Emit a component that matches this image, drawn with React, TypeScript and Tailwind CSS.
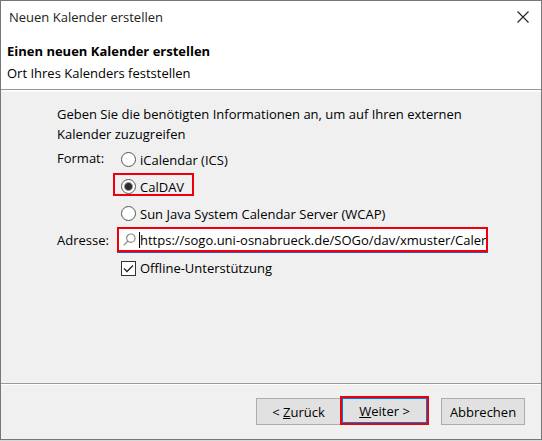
import { useState, type ReactNode } from 'react';
import { clsx } from 'clsx';

const formats = [
  { id: 'ics', label: 'iCalendar (ICS)' },
  { id: 'caldav', label: 'CalDAV' },
  { id: 'wcap', label: 'Sun Java System Calendar Server (WCAP)' },
];

function SearchIcon() {
  return (
    <svg className="h-[14px] w-[14px] shrink-0" viewBox="0 0 14 14" fill="none" stroke="#8a8a8a" strokeWidth="1.2" aria-hidden="true">
      <circle cx="7.8" cy="5.2" r="4.2" />
      <path d="M4.8 8.3.6 12.4" />
    </svg>
  );
}

function DialogButton({ children, className }: { children: ReactNode; className?: string }) {
  return (
    <button type="button" className={clsx('whitespace-nowrap bg-[#e1e1e1] text-center', className)}>
      {children}
    </button>
  );
}

export default function App() {
  const [format, setFormat] = useState('caldav');
  const [address, setAddress] = useState('https://sogo.uni-osnabrueck.de/SOGo/dav/xmuster/Caler');
  const [offline, setOffline] = useState(true);

  return (
    <div className="min-h-screen bg-[#d8d8d8] pb-px font-['Open_Sans','Noto_Sans',sans-serif] text-[13px] leading-5 text-black">
      <div className="flex min-h-[calc(100vh-1px)] flex-col border border-[#777777] bg-[#f0f0f0]">
        <header className="border-b border-[#999999] bg-white pb-1.5">
          <div className="flex h-8 items-center justify-between pr-3 pl-2">
            <span className="text-[#222222]">Neuen Kalender erstellen</span>
            <button type="button" aria-label="Schließen">
              <svg className="h-3 w-3" viewBox="0 0 12 12" stroke="#222222" strokeWidth="1.1">
                <path d="M.5.5l11 11M11.5.5l-11 11" />
              </svg>
            </button>
          </div>
          <div className="flex flex-col gap-0.5 px-1.5 pt-2">
            <h1 className="font-bold">Einen neuen Kalender erstellen</h1>
            <p>Ort Ihres Kalenders feststellen</p>
          </div>
        </header>

        <main className="flex-1 border-t-2 border-[#fafafa] pt-3 pr-[53px] pl-14">
          <p className="mb-0.5">
            Geben Sie die benötigten Informationen an, um auf Ihren externen Kalender zuzugreifen
          </p>
          <div className="grid grid-cols-[60px_1fr]">
            <span id="format-label" className="pt-0.5">Format:</span>
            <div role="radiogroup" aria-labelledby="format-label" className="flex flex-col items-start">
              {formats.map(({ id, label }) => (
                <label
                  key={id}
                  className={clsx(
                    '-ml-1 flex items-center gap-1 border-2 px-1.5',
                    id === format ? 'mb-1 h-[23px] border-[#ed000c] pt-1 pr-2' : 'h-[27px] border-transparent',
                  )}
                >
                  <input
                    type="radio"
                    name="format"
                    checked={id === format}
                    onChange={() => setFormat(id)}
                    className="h-[15px] w-[15px] appearance-none rounded-full border border-[#555555] bg-white checked:bg-[radial-gradient(circle,#2b2b2b_3px,transparent_5px)]"
                  />
                  {label}
                </label>
              ))}
            </div>

            <label htmlFor="address" className="self-center">Adresse:</label>
            <div className="flex h-[25px] min-w-0 items-center gap-0.5 border-2 border-[#ed000c] bg-white pl-1 shadow-[0_1px_0_#3f51b5]">
              <SearchIcon />
              <div className="flex h-4 min-w-0 flex-1 items-center border-l border-black">
                <input
                  id="address"
                  type="text"
                  value={address}
                  onChange={(e) => setAddress(e.target.value)}
                  className="w-full min-w-0 outline-none"
                />
              </div>
            </div>

            <label className="col-start-2 mt-1.5 flex items-center gap-1 pl-1">
              <span className="grid h-[15px] w-[15px]">
                <input
                  type="checkbox"
                  checked={offline}
                  onChange={(e) => setOffline(e.target.checked)}
                  className="col-start-1 row-start-1 h-[15px] w-[15px] appearance-none border border-[#333333] bg-white"
                />
                {offline && (
                  <svg className="pointer-events-none col-start-1 row-start-1" viewBox="0 0 15 15" fill="none" stroke="#222222" strokeWidth="1.3">
                    <path d="M3 7.5 6 10.5 12 4.5" />
                  </svg>
                )}
              </span>
              Offline-Unterstützung
            </label>
          </div>
        </main>

        <footer className="flex items-end justify-end border-t border-[#999999] pt-3 pr-4 pb-3.5 shadow-[inset_0_1px_0_#ffffff]">
          <DialogButton className="h-[27px] w-[84px] border border-r-0 border-[#adadad]">
            &lt; <u>Z</u>urück
          </DialogButton>
          <DialogButton className="mr-3 h-[29px] w-[89px] border-2 border-[#ed000c] shadow-[inset_0_0_0_1px_#0078d7]">
            <u>W</u>eiter &gt;
          </DialogButton>
          <DialogButton className="h-[27px] w-[84px] border border-[#adadad]">Abbrechen</DialogButton>
        </footer>
      </div>
    </div>
  );
}
